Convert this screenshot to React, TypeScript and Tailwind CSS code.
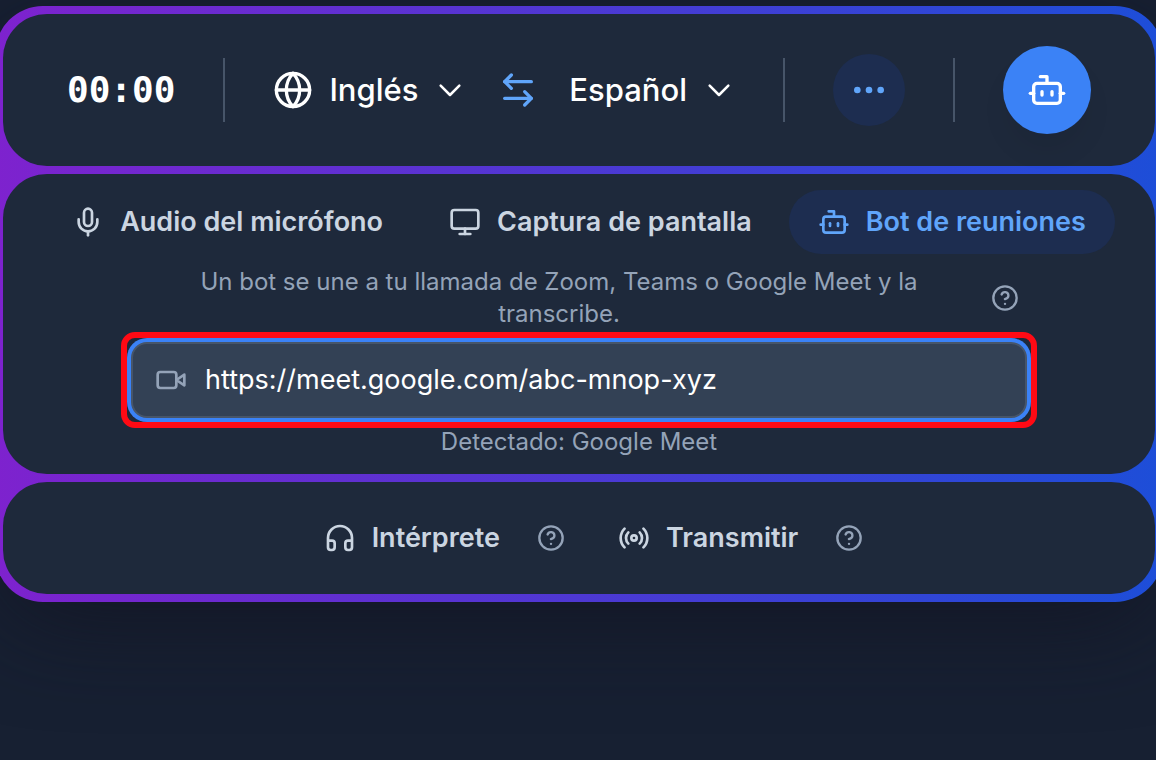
import { useState, type ReactNode } from "react";
import {
  ArrowLeftRight,
  Bot,
  CircleHelp,
  Ellipsis,
  Globe,
  Headphones,
  Mic,
  Monitor,
  Radio,
} from "lucide-react";

const LANGUAGES = ["Inglés", "Español"];

function ChevronIcon() {
  return (
    <svg viewBox="0 0 24 24" fill="none" stroke="currentColor" strokeWidth="1.9" strokeLinecap="round" strokeLinejoin="round" className="pointer-events-none size-8 shrink-0" aria-hidden="true">
      <path d="m19 8.75-7 7-7-7" />
    </svg>
  );
}

function VideoIcon() {
  return (
    <svg viewBox="0 0 24 24" fill="none" stroke="currentColor" strokeWidth="2" strokeLinecap="round" strokeLinejoin="round" className="size-8 shrink-0" aria-hidden="true">
      <path d="m22 8-6 4 6 4V8Z" />
      <rect x="2" y="6" width="14" height="12" rx="2" />
    </svg>
  );
}

function LanguageSelect({ label, value, onChange, icon }: { label: string; value: string; onChange: (v: string) => void; icon?: ReactNode }) {
  return (
    <label className="flex items-center gap-4 text-white">
      {icon}
      <select
        aria-label={label}
        value={value}
        onChange={(e) => onChange(e.target.value)}
        className="field-sizing-content cursor-pointer appearance-none bg-transparent text-[31px] leading-10 font-medium outline-none"
      >
        {LANGUAGES.map((l) => (
          <option key={l} className="bg-slate-800">{l}</option>
        ))}
      </select>
      <ChevronIcon />
    </label>
  );
}

function Divider() {
  return <div className="h-16 w-0.5 shrink-0 bg-[#475569]" />;
}

function Pill({ icon, children, active, onClick }: { icon: ReactNode; children: ReactNode; active?: boolean; onClick?: () => void }) {
  return (
    <button
      type="button"
      aria-pressed={active}
      onClick={onClick}
      className={`flex h-16 items-center gap-4 rounded-full px-[29px] text-[27px] font-semibold whitespace-nowrap ${active ? "bg-[#1d2d50] text-[#60a5fa]" : "text-[#cbd5e1]"}`}
    >
      {icon}
      {children}
    </button>
  );
}

function HelpButton({ label }: { label: string }) {
  return (
    <button type="button" aria-label={label} className="shrink-0 text-[#94a3b8]">
      <CircleHelp className="size-7" />
    </button>
  );
}

export default function App() {
  const [from, setFrom] = useState("Inglés");
  const [to, setTo] = useState("Español");
  const [source, setSource] = useState("bot");
  const [url, setUrl] = useState("https://meet.google.com/abc-mnop-xyz");

  return (
    <main className="min-h-screen overflow-hidden bg-[#172032] pt-1.5 font-['Inter','Liberation_Sans',sans-serif]">
      <div className="-mr-[7px] -ml-[5px] flex flex-col gap-2 rounded-[48px] bg-linear-to-r/srgb from-[#7e22ce] to-[#1d4ed8] p-2 shadow-[0_24px_100px_-12px_rgba(18,19,32,0.8)]">
        <section className="flex h-[152px] items-center gap-12 rounded-[44px] bg-[#1e293b] px-16">
          <time className="font-['DejaVu_Sans_Mono','Liberation_Mono',monospace] text-[36px] leading-10 font-bold text-white">00:00</time>
          <Divider />
          <div className="flex flex-1 items-center justify-between">
            <LanguageSelect label="Idioma de origen" value={from} onChange={setFrom} icon={<Globe className="size-10 shrink-0" />} />
            <button
              type="button"
              aria-label="Intercambiar idiomas"
              onClick={() => {
                setFrom(to);
                setTo(from);
              }}
              className="text-[#60a5fa]"
            >
              <ArrowLeftRight className="size-10" />
            </button>
            <LanguageSelect label="Idioma de destino" value={to} onChange={setTo} />
          </div>
          <Divider />
          <button type="button" aria-label="Más opciones" className="flex size-[72px] shrink-0 items-center justify-center rounded-full bg-[#1d2d50] text-[#60a5fa]">
            <Ellipsis className="size-10" />
          </button>
          <Divider />
          <button type="button" aria-label="Iniciar bot" className="flex size-[88px] shrink-0 items-center justify-center rounded-full bg-[#3b82f6] text-white shadow-[0_20px_30px_-6px_rgba(0,0,0,0.08)]">
            <Bot className="size-10" />
          </button>
        </section>

        <section className="flex flex-col items-center rounded-[44px] bg-[#1e293b] py-4">
          <div className="flex justify-center gap-2">
            <Pill icon={<Mic className="size-8" />} active={source === "mic"} onClick={() => setSource("mic")}>Audio del micrófono</Pill>
            <Pill icon={<Monitor className="size-8" />} active={source === "screen"} onClick={() => setSource("screen")}>Captura de pantalla</Pill>
            <Pill icon={<Bot className="size-8" />} active={source === "bot"} onClick={() => setSource("bot")}>Bot de reuniones</Pill>
          </div>
          <div className="mt-3 flex w-full max-w-[896px] flex-col">
            <div className="flex items-center gap-3 px-2">
              <p className="flex-1 px-14 text-center text-[24px] leading-8 text-[#94a3b8]">
                Un bot se une a tu llamada de Zoom, Teams o Google Meet y la transcribe.
              </p>
              <HelpButton label="Ayuda sobre el bot de reuniones" />
            </div>
            <label className="relative mt-3 flex h-[76px] items-center gap-[18px] rounded-[16px] border-2 border-[#475569] bg-[#334155] px-[22px] text-[#94a3b8] ring-4 ring-[#3b82f6]">
              <VideoIcon />
              <input
                type="url"
                aria-label="Enlace de la reunión"
                value={url}
                onChange={(e) => setUrl(e.target.value)}
                className="min-w-0 flex-1 bg-transparent text-[27px] leading-10 text-white outline-none"
              />
              <span className="pointer-events-none absolute -inset-3 rounded-[14px] border-6 border-[#ff0a14]" />
            </label>
            <p className="mt-2 text-center text-[24px] leading-8 text-[#94a3b8]">Detectado: Google Meet</p>
          </div>
        </section>

        <section className="flex items-center justify-center gap-6 rounded-[44px] bg-[#1e293b] py-6">
          <div className="flex items-center gap-2">
            <Pill icon={<Headphones className="size-8" />}>Intérprete</Pill>
            <HelpButton label="Ayuda sobre el intérprete" />
          </div>
          <div className="flex items-center gap-2">
            <Pill icon={<Radio className="size-8" />}>Transmitir</Pill>
            <HelpButton label="Ayuda sobre transmitir" />
          </div>
        </section>
      </div>
    </main>
  );
}
